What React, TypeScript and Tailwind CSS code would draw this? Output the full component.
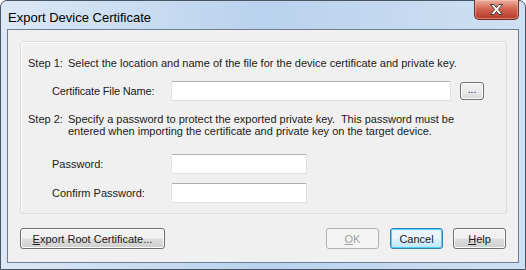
import React from "react";

const font = "font-['Liberation_Sans',Arial,sans-serif]";

export default function App() {
  return (
    <div className={`w-[526px] h-[270px] ${font} text-[11px] text-[#1b1b1b]`}>
      <div className="relative flex flex-col w-full h-full border border-[#4a5563] rounded-t-[7px] px-[6px] pb-[6px] bg-gradient-to-r from-[#dbe8f6] via-[#b9d2ed] to-[#cfe0f3]">
        {/* Title bar */}
        <div className="flex items-start justify-between h-[28px]">
          <span className="pl-[1px] pt-[7px] text-[13px] text-black">
            Export Device Certificate
          </span>
          <CloseButton />
        </div>

        {/* Client area */}
        <div className="flex flex-col flex-1 border border-[#6e7f93] bg-[#f0f0f0]">
          <div className="mt-[11px] ml-[12px] mr-[11px] h-[173px] border border-[#d5dfe5] rounded-[3px] shadow-[inset_1px_1px_0_#fff] px-[7px] pt-[15px]">
            <StepText step="Step 1:">
              Select the location and name of the file for the device certificate and private key.
            </StepText>

            <div className="flex items-center mt-[12px] h-[20px]">
              <span className="w-[143px] pl-[24px] tracking-[-0.15px]">Certificate File Name:</span>
              <TextBox className="w-[280px]" />
              <button className="ml-[9px] w-[24px] h-[18px] rounded-[3px] border border-[#707070] bg-gradient-to-b from-[#f2f2f2] via-[#ebebeb] to-[#d8d8d8] shadow-[inset_0_0_0_1px_#fcfcfc] flex items-end justify-center pb-[4px] text-[10px] leading-none text-[#20125a]">
                ...
              </button>
            </div>

            <div className="mt-[12px]">
              <StepText step="Step 2:">
                Specify a password to protect the exported private key.&nbsp; This password must be entered when importing the certificate and private key on the target device.
              </StepText>
            </div>

            <div className="flex items-center mt-[17px] h-[20px]">
              <span className="w-[143px] pl-[24px]">Password:</span>
              <TextBox className="w-[136px]" />
            </div>
            <div className="flex items-center mt-[9px] h-[20px]">
              <span className="w-[143px] pl-[24px]">Confirm Password:</span>
              <TextBox className="w-[136px]" />
            </div>
          </div>

          <div className="flex items-center mt-[14px] ml-[12px] mr-[12px]">
            <WinButton className="w-[145px]">
              <u>E</u>xport Root Certificate...
            </WinButton>
            <div className="flex-1" />
            <WinButton className="w-[53px]" disabled>
              <u>O</u>K
            </WinButton>
            <WinButton className="w-[53px] ml-[11px]" isDefault>
              Cancel
            </WinButton>
            <WinButton className="w-[53px] ml-[10px]">
              <u>H</u>elp
            </WinButton>
          </div>
        </div>
      </div>
    </div>
  );
}

function StepText({ step, children }: { step: string; children: React.ReactNode }) {
  return (
    <div className="flex leading-[12px]">
      <span className="w-[40px] shrink-0">{step}</span>
      <p className="w-[410px]">{children}</p>
    </div>
  );
}

function TextBox({ className = "" }: { className?: string }) {
  return (
    <div
      className={`h-[20px] bg-white border border-[#dbdfe6] border-t-[#abadb3] border-l-[#e2e3ea] rounded-[2px] ${className}`}
    />
  );
}

function WinButton({
  children,
  className = "",
  disabled = false,
  isDefault = false,
}: {
  children: React.ReactNode;
  className?: string;
  disabled?: boolean;
  isDefault?: boolean;
}) {
  let look =
    "border-[#707070] bg-gradient-to-b from-[#f2f2f2] from-45% via-[#dddddd] via-55% to-[#cfcfcf] shadow-[inset_0_0_0_1px_#fbfbfb] text-[#1b1b1b]";
  if (disabled) {
    look = "border-[#adb2b5] bg-[#f4f4f4] text-[#a0a0a0]";
  }
  if (isDefault) {
    look =
      "border-[#3c7fb1] bg-gradient-to-b from-[#eaf6fd] from-45% via-[#d9f0fc] via-55% to-[#bee6fd] shadow-[inset_0_0_0_1px_#48d4ff] text-[#1b1b1b]";
  }
  return (
    <button
      disabled={disabled}
      className={`h-[21px] rounded-[3px] border flex items-center justify-center leading-none pt-[1px] ${look} ${className}`}
    >
      <span>{children}</span>
    </button>
  );
}

function CloseButton() {
  return (
    <div className="-mt-[1px] w-[45px] h-[20px] rounded-b-[5px] border border-t-0 border-[#6b2a22] bg-gradient-to-b from-[#eeb0a0] via-[#d0604e] to-[#b83a2a] shadow-[inset_0_0_0_1px_rgba(255,210,200,0.45)] flex items-center justify-center">
      <svg width="15" height="13" viewBox="0 0 15 13">
        <path
          d="M1.5 1.5h3.5l2.5 3 2.5-3h3.5l-4.2 5 4.2 5h-3.5l-2.5-3-2.5 3h-3.5l4.2-5z"
          fill="#fff"
          stroke="#3d3d3d"
          strokeWidth="1"
          strokeLinejoin="round"
        />
      </svg>
    </div>
  );
}
